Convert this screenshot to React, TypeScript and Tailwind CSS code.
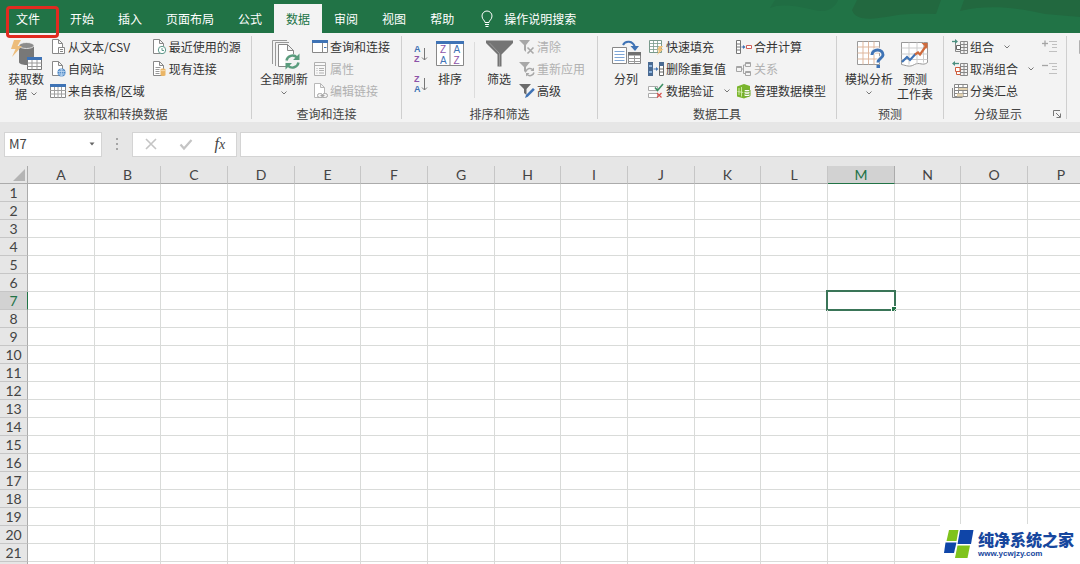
import type { ReactNode } from "react";

type Tone = "normal" | "muted";

const TABS = ["文件", "开始", "插入", "页面布局", "公式", "数据", "审阅", "视图", "帮助"];
const COLUMNS = "ABCDEFGHIJKLMNOPQRSTUVWXYZ".split("");
const ROWS = Array.from({ length: 40 }, (_, i) => i + 1);
const ACTIVE = { col: "M", row: 7 };

const Chevron = () => (
  <svg viewBox="0 0 6 4" className="h-1 w-1.5 shrink-0" fill="none" stroke="#777" aria-hidden="true">
    <path d="M0.5 0.5 3 3l2.5-2.5" />
  </svg>
);

const Icon = ({ children, large }: { children: ReactNode; large?: boolean }) => (
  <svg
    viewBox={large ? "0 0 32 32" : "0 0 16 16"}
    className={large ? "h-8 w-8 shrink-0" : "h-4 w-4 shrink-0"}
    fill="none"
    aria-hidden="true"
  >
    {children}
  </svg>
);

const Page = ({ color = "#888" }: { color?: string }) => (
  <path d="M2.5 0.5h6l4 4v10h-10zM8.5 0.5v4h4" fill="#fff" stroke={color} />
);

/* ---- small icons ---- */

const TextFileIcon = () => (
  <Icon>
    <Page />
    <path d="M8.500 8.500h6v6h-6z" fill="#fff" stroke="#888" />
    <path d="M10 10.500h3M10 12.500h3" stroke="#888" />
  </Icon>
);

const WebIcon = () => (
  <Icon>
    <Page />
    <circle cx="11.5" cy="11.5" r="4" fill="#4a86c5" />
    <path d="M8 10.500h7M8 13h7M11.500 8v7" stroke="#c9def3" strokeWidth="0.7" />
    <ellipse cx="11.5" cy="11.5" rx="1.8" ry="3.6" stroke="#c9def3" strokeWidth="0.7" />
  </Icon>
);

const TableIcon = () => (
  <Icon>
    <path d="M0.5 1.5h15v13h-15z" fill="#fff" stroke="#888" />
    <path d="M0 1h16v3H0z" fill="#3f73b5" />
    <path d="M0 7.5h16M0 11h16M4.5 4v11M8 4v11M11.5 4v11" stroke="#a0a0a0" />
  </Icon>
);

const RecentIcon = () => (
  <Icon>
    <Page />
    <circle cx="11" cy="11" r="3.7" fill="#fff" stroke="#5f9a8c" />
    <path d="M11 9v2.5h2" stroke="#5f9a8c" />
  </Icon>
);

const ExistingIcon = () => (
  <Icon>
    <Page />
    <path d="M4.5 6.5h5M4.5 8.5h4M4.5 10.5h4M4.5 12.5h4" stroke="#999" />
    <path d="M9.500 8.500c0-1.400 5-1.400 5 0V14c0 1.400-5 1.400-5 0z" fill="#eab566" />
    <path d="M9.500 8.800c0 1.200 5 1.200 5 0" stroke="#fbe3bd" strokeWidth="0.8" />
  </Icon>
);

const PaneIcon = () => (
  <Icon>
    <path d="M0.5 1.5h15v12h-15z" fill="#fff" stroke="#888" />
    <path d="M0 1h16v3H0z" fill="#3f73b5" />
    <path d="M10.5 4v9.5" stroke="#888" />
    <path d="M12 8.5h2.5" stroke="#3f73b5" />
  </Icon>
);

const PropertiesIcon = () => (
  <Icon>
    <path d="M2.5 1.5h11v13h-11z" fill="#f8f8f8" stroke="#b0b0b0" />
    <path d="M2.5 4.5h11" stroke="#b0b0b0" />
    <path d="M4.5 7.5h1M7 7.5h5M4.5 9.5h1M7 9.5h5M4.5 12h1M7 12h5" stroke="#b0b0b0" />
  </Icon>
);

const EditLinksIcon = () => (
  <Icon>
    <Page color="#b8b8b8" />
    <rect x="5.5" y="10.5" width="5" height="4" rx="2" fill="#f3f3f3" stroke="#a5a5a5" />
    <rect x="10.5" y="10.5" width="5" height="4" rx="2" fill="#f3f3f3" stroke="#a5a5a5" />
    <path d="M8.5 12.5h4" stroke="#a5a5a5" />
  </Icon>
);

const ClearFilterIcon = () => (
  <Icon>
    <path d="M0 1h11L7 6v7l-2-2V6z" fill="#a8a8a8" />
    <path d="m8.500 8.500 6 6M14.500 8.500l-6 6" stroke="#a8a8a8" strokeWidth="1.6" />
  </Icon>
);

const ReapplyIcon = () => (
  <Icon>
    <path d="M0 1h11L7 6v6l-2-2V6z" fill="#a8a8a8" />
    <path d="M7 10.500a4 4 0 0 1 7-1.500M15 11.500a4 4 0 0 1-7 1.700" stroke="#a8a8a8" strokeWidth="1.5" />
    <path d="M15 6.500v3.500h-3.500zM7 15.500V12h3.500z" fill="#a8a8a8" />
  </Icon>
);

const AdvancedIcon = () => (
  <Icon>
    <path d="M0 1h12L7.500 6v6l-2.500-2V6z" fill="#6b6b6b" />
    <path d="m6 15 1-3 7-7 1.800 1.800-7 7z" fill="#3f73b5" />
  </Icon>
);

const FlashFillIcon = () => (
  <Icon>
    <path d="M1.5 1.5h12v12h-12z" fill="#fff" stroke="#7a9a8c" />
    <path
      d="M1.5 4.5h12M1.5 7.5h12M1.5 10.5h12M5.5 1.5v12M9.5 1.5v12"
      stroke="#7a9a8c"
      strokeWidth="0.8"
    />
    <path d="M11 7h4l-2 3h2.500L9 16l2-4.500H9z" fill="#efc27a" />
  </Icon>
);

const DuplicatesIcon = () => (
  <Icon>
    <path d="M0 1h5v14H0z" fill="#4a6a92" />
    <path d="M1 4h3v2H1zM1 10h3v2H1z" fill="#8db4e0" />
    <path d="M11.5 1.5h4v13h-4z" fill="#fff" stroke="#666" />
    <path d="M11 1h5v4h-5z" fill="#4a6a92" />
    <path d="M11.5 8h4M11.5 11h4" stroke="#666" />
    <path d="M5.5 8h3" stroke="#3f73b5" />
    <path d="m8 6 2.500 2L8 10z" fill="#3f73b5" />
  </Icon>
);

const ValidationIcon = () => (
  <Icon>
    <path d="M0.5 3.5h9v4h-9zM0.5 10.5h9v4h-9z" fill="#fff" stroke="#aaa" />
    <path d="m7 4.500 2.500 3L15 1" stroke="#3d8f63" strokeWidth="1.6" />
    <path d="m9 10 4.500 4.500M13.500 10 9 14.500" stroke="#d9534f" strokeWidth="1.2" />
  </Icon>
);

const ConsolidateIcon = () => (
  <Icon>
    <path d="M0.5 1.5h4v13h-4zM0.5 5h4M0.5 8h4M0.5 11h4" fill="#fff" stroke="#777" />
    <path d="M5.500 8h3" stroke="#3f73b5" />
    <path d="M7 6l2.500 2L7 10z" fill="#3f73b5" />
    <path d="M10.5 6.5h5v3h-5z" fill="#fff" stroke="#d0605a" />
  </Icon>
);

const RelationsIcon = () => (
  <Icon>
    <path d="M0.5 5.5h5v5h-5zM9.5 1.5h5v4h-5zM9.5 10.5h5v4h-5z" stroke="#a5a5a5" />
    <path d="M0.5 6.5h5M9.5 2.5h5M9.5 11.5h5" stroke="#a5a5a5" />
    <path d="M5.5 8h2M7.5 4v8.5M7.5 4h2M7.5 12.5h2" stroke="#a5a5a5" />
  </Icon>
);

const ModelIcon = () => (
  <Icon>
    <path d="M1 3.500 8 1l6 2v10l-6 2.500-7-2z" fill="#7ab52d" />
    <path d="M3 5v7M1.500 8.500l6 1M5.500 4v9.500" stroke="#d4ecae" strokeWidth="0.9" />
    <path d="M8 7.500c0-1.500 6-1.500 6 0v5c0 1.500-6 1.500-6 0z" fill="#fff" stroke="#6fa82a" />
    <path d="M8 7.800c0 1.400 6 1.400 6 0M8 10.300c0 1.400 6 1.400 6 0" stroke="#6fa82a" />
  </Icon>
);

const GroupIcon = () => (
  <Icon>
    <path d="M8.5 2.5h7v12h-7zM8.5 5.5h7M8.5 8.5h7M8.5 11.5h7M12 2.5v12" stroke="#888" />
    <path d="M3.5 4v8.5h5" stroke="#888" />
    <path d="M4.5 6.5h4v4h-4z" fill="#fff" stroke="#666" />
    <path d="M0 2.5h4" stroke="#4c8f80" strokeWidth="1.3" />
    <path d="M3 0v5l3-2.500z" fill="#4c8f80" />
  </Icon>
);

const UngroupIcon = () => (
  <Icon>
    <path d="M8.5 2.5h7v12h-7zM8.5 5.5h7M8.5 8.5h7M8.5 11.5h7M12 2.5v12" stroke="#888" />
    <path d="M3.5 6.5h4.5v4H3.500zM4.500 10.500v3h4" fill="#fff" stroke="#cf5d3c" />
    <path d="M2 2.5h5" stroke="#4c8f80" strokeWidth="1.3" />
    <path d="M3 0v5L0 2.500z" fill="#4c8f80" />
  </Icon>
);

const SubtotalIcon = () => (
  <Icon>
    <path d="M2.5 1.5h13v12h-13z" fill="#fff" stroke="#888" />
    <path d="M2.5 4.5h13M2.5 7.5h13M2.5 10.5h13M6.5 1.5v12M11 1.5v12" stroke="#888" />
    <path d="M0.5 5v9.500h10" stroke="#888" />
    <path d="M6.500 5h9v2h-9zM5 10.500h6v3H5z" fill="#e5d3b0" />
  </Icon>
);

const DetailIcon = ({ plus }: { plus?: boolean }) => (
  <Icon>
    <path d="M0 4.5h6" stroke="#a5a5a5" strokeWidth="1.3" />
    {plus && <path d="M3 1.500v6" stroke="#a5a5a5" strokeWidth="1.3" />}
    <path d="M7 2.5h8M10 5.5h5M10 8.5h5M7 12.5h8" stroke="#c0c0c0" />
  </Icon>
);

const SortPairIcon = ({ top, bottom }: { top: string; bottom: string }) => (
  <svg viewBox="0 0 14 20" className="h-5 w-3.5" aria-hidden="true">
    <g fontFamily="Liberation Sans, sans-serif" fontSize="9" fontWeight="700">
      <text x="0" y="8" fill={top === "A" ? "#3f73b5" : "#8d54a8"}>{top}</text>
      <text x="0" y="18" fill={bottom === "A" ? "#3f73b5" : "#8d54a8"}>{bottom}</text>
    </g>
    <path d="M10.5 4v12M8 13.5l2.500 2.500 2.500-2.500" fill="none" stroke="#777" />
  </svg>
);

/* ---- large icons ---- */

const GetDataIcon = () => (
  <Icon large>
    <path d="M9 7v16c0 4 15 4 15 0V7z" fill="#787878" />
    <ellipse cx="16.5" cy="6.500" rx="7.500" ry="3" fill="#8c8c8c" stroke="#f3f3f3" strokeWidth="0.8" />
    <path d="M4 1h7L7.500 7H12L2 18l3.500-8H1z" fill="#edbd7b" />
    <path d="M17.5 18.5h14v12h-14z" fill="#fff" stroke="#777" />
    <path d="M17 18h15v3H17z" fill="#3f73b5" />
    <path d="M17.5 24h14M17.5 27.5h14M22 21v9.500M27 21v9.500" stroke="#999" />
  </Icon>
);

const RefreshAllIcon = () => (
  <Icon large>
    <path d="M4.5 25V1.5H19M7.5 27V3.5H21" stroke="#999" />
    <path d="M10.5 5.5h9l6 6v16h-15zM19.5 5.5v6h6" fill="#fff" stroke="#888" />
    <circle cx="24.500" cy="22.500" r="7.500" fill="#f3f3f3" />
    <path
      d="M18.500 21.500a6.200 6.200 0 0 1 10.500-3M30.500 23.500a6.200 6.200 0 0 1-10.500 3.200"
      stroke="#5a9c7d"
      strokeWidth="2.4"
    />
    <path d="M31.500 14.500v6.500H25zM17.500 30.500V24H24z" fill="#5a9c7d" />
  </Icon>
);

const SortIcon = () => (
  <Icon large>
    <path d="M2.5 3.5h27v23h-27z" fill="#fff" stroke="#888" />
    <path d="M2 2h28v3H2z" fill="#3f73b5" />
    <path d="M16 5v21.500" stroke="#888" />
    <g fontFamily="Liberation Sans, sans-serif" fontSize="10">
      <text x="6" y="14" fill="#8d54a8">Z</text>
      <text x="6" y="25" fill="#3f73b5">A</text>
      <text x="19.5" y="14" fill="#3f73b5">A</text>
      <text x="19.5" y="25" fill="#8d54a8">Z</text>
    </g>
  </Icon>
);

const FilterIcon = () => (
  <Icon large>
    <path d="M3 1.500h27V4L18.500 15.500v12h-4v-12L3 4z" fill="#747474" />
    <path d="M6.500 4l10 10.500V27" stroke="#999" />
  </Icon>
);

const SplitIcon = () => (
  <Icon large>
    <path d="M2.5 8.5h14v16h-14z" fill="#fff" stroke="#888" />
    <path d="M4.500 12.500h10M4.500 15.500h10M4.500 18.500h10M4.500 21.500h10" stroke="#7fa6d6" />
    <path d="M18.5 13.5h12v11h-12z" fill="#fff" stroke="#888" />
    <path d="M18 13h13v3.500H18z" fill="#707070" />
    <path d="M18.5 19.5h12M18.5 22.5h12M24.5 16.5v8" stroke="#999" />
    <path d="M13 6c2-4.500 10-5 12 2.500" stroke="#3f73b5" strokeWidth="2" />
    <path d="M20.500 7h8.500l-4 5z" fill="#3f73b5" />
  </Icon>
);

const WhatIfIcon = () => (
  <Icon large>
    <path d="M4.5 2.5h22v23h-22z" fill="#fff" stroke="#999" />
    <path d="M4.5 8h22M4.5 14h22M4.5 20h22M10 2.5v23M15.500 2.500v23M21 2.500v23" stroke="#dfb79d" />
    <path d="M19 16c0-7 11.500-6.500 11 0-.3 3.500-5 3.500-5 7.500" stroke="#f3f3f3" strokeWidth="5" />
    <path d="M19 16c0-7 11.500-6.500 11 0-.3 3.500-5 3.500-5 7.500" stroke="#3f73b5" strokeWidth="3" />
    <path d="M23.500 26h3.500v3h-3.500z" fill="#3f73b5" />
  </Icon>
);

const ForecastIcon = () => (
  <Icon large>
    <path d="M2.5 3.5h26v20c-5 4-8-1-13 2s-8 1-13 0z" fill="#fff" stroke="#999" />
    <path d="M2.5 9h26M2.5 15h26M2.5 20.5h26M10 3.5v22M18 3.5v22M24.500 3.500v20" stroke="#cdcdcd" />
    <path d="m3 23 5-5 3 3 5.500-6" stroke="#3f73b5" strokeWidth="2.2" />
    <path d="m16 15.500 3-2 2 2L27 7" stroke="#cf6a3c" strokeWidth="2.2" />
    <path d="M22.500 4h6v6z" fill="#cf6a3c" />
  </Icon>
);

/* ---- ribbon parts ---- */

const SmallButton = ({
  icon,
  label,
  tone = "normal",
  menu,
}: {
  icon: ReactNode;
  label: string;
  tone?: Tone;
  menu?: boolean;
}) => (
  <button
    type="button"
    disabled={tone === "muted"}
    className={`flex h-[22px] items-center gap-0.5 whitespace-nowrap text-xs ${
      tone === "muted" ? "text-[#b1b1b1]" : "text-[#333]"
    }`}
  >
    {icon}
    {label}
    {menu && (
      <span className="ml-2">
        <Chevron />
      </span>
    )}
  </button>
);

const LargeButton = ({
  icon,
  lines,
  menu,
}: {
  icon: ReactNode;
  lines: string[];
  menu?: "inline" | "below";
}) => (
  <button
    type="button"
    className="flex flex-col items-center whitespace-nowrap pt-[3px] text-[#333] text-xs leading-[15px]"
  >
    {icon}
    {lines.map((line, i) => (
      <span key={line} className="flex items-center gap-1">
        {line}
        {menu === "inline" && i === lines.length - 1 && <Chevron />}
      </span>
    ))}
    {menu === "below" && (
      <span className="flex h-3.5 items-center">
        <Chevron />
      </span>
    )}
  </button>
);

const Group = ({
  label,
  className,
  launcher,
  children,
}: {
  label: string;
  className: string;
  launcher?: boolean;
  children: ReactNode;
}) => (
  <section
    aria-label={label}
    className={`flex shrink-0 flex-col justify-between border-[#cfcfcf] border-r ${className}`}
  >
    <div className="flex items-start">{children}</div>
    <div className="flex h-2.5 items-center">
      <span className="flex-1 text-center text-[#444] text-xs">{label}</span>
      {launcher && (
        <button type="button" aria-label={label} className="mr-0.5 w-3">
          <svg viewBox="0 0 10 10" className="h-2.5 w-2.5" fill="none" stroke="#777" aria-hidden="true">
            <path d="M1.5 7V1.5H8M4 4l4 4M8.5 4.500v4h-4" />
          </svg>
        </button>
      )}
    </div>
  </section>
);

const TitleBar = () => (
  <header className="relative flex h-[33px] shrink-0 items-end overflow-hidden bg-[#217346] text-white text-xs">
    <svg viewBox="0 0 320 33" className="absolute top-0 right-0 h-[33px] w-80" aria-hidden="true">
      <path d="M10 8c10-5 28-2 44 2 10 3 20 0 24-10H15z" fill="#206d43" />
      <path d="M92 10c4 12 22 9 40 6s30-2 44-2l5-14H97z" fill="#22683f" />
      <path d="M200 11c30-7 58-3 85 3l35 3V0H204z" fill="#22683f" />
    </svg>
    <nav className="relative flex h-[29px] pl-1">
      {TABS.map((tab, i) => (
        <button
          key={tab}
          type="button"
          className={`h-full px-3 ${i === 0 ? "mr-1.5" : ""} ${
            tab === "数据" ? "bg-[#f3f3f3] text-[#217346]" : ""
          }`}
        >
          {tab}
        </button>
      ))}
    </nav>
    <button type="button" className="relative ml-2 flex h-[29px] items-center gap-2.5 px-1.5">
      <svg viewBox="0 0 14 18" className="h-[18px] w-3.5" fill="none" stroke="#fff" aria-hidden="true">
        <path d="M5 12.500c0-2-3-3-3-6.500a5 5 0 0 1 10 0c0 3.500-3 4.500-3 6.500zM5 14.500h4M5.500 16.500h3" />
      </svg>
      操作说明搜索
    </button>
  </header>
);

const Ribbon = () => (
  <div className="flex h-[89px] shrink-0 overflow-hidden bg-[#f3f3f3] py-[3px]">
    <Group label="获取和转换数据" className="w-[252px]">
      <div className="ml-2">
        <LargeButton icon={<GetDataIcon />} lines={["获取数", "据"]} menu="inline" />
      </div>
      <div className="ml-1.5">
        <SmallButton icon={<TextFileIcon />} label="从文本/CSV" />
        <SmallButton icon={<WebIcon />} label="自网站" />
        <SmallButton icon={<TableIcon />} label="来自表格/区域" />
      </div>
      <div className="ml-1.5">
        <SmallButton icon={<RecentIcon />} label="最近使用的源" />
        <SmallButton icon={<ExistingIcon />} label="现有连接" />
      </div>
    </Group>

    <Group label="查询和连接" className="w-[150px]">
      <div className="ml-2">
        <LargeButton icon={<RefreshAllIcon />} lines={["全部刷新"]} menu="below" />
      </div>
      <div className="ml-1">
        <SmallButton icon={<PaneIcon />} label="查询和连接" />
        <SmallButton icon={<PropertiesIcon />} label="属性" tone="muted" />
        <SmallButton icon={<EditLinksIcon />} label="编辑链接" tone="muted" />
      </div>
    </Group>

    <Group label="排序和筛选" className="w-[196px]">
      <div className="ml-3 flex flex-col gap-2.5 pt-2">
        <button type="button" aria-label="升序">
          <SortPairIcon top="A" bottom="Z" />
        </button>
        <button type="button" aria-label="降序">
          <SortPairIcon top="Z" bottom="A" />
        </button>
      </div>
      <div className="ml-1.5">
        <LargeButton icon={<SortIcon />} lines={["排序"]} />
      </div>
      <div className="mx-2 mt-1.5 h-14 w-px bg-[#dcdcdc]" />
      <LargeButton icon={<FilterIcon />} lines={["筛选"]} />
      <div className="ml-1">
        <SmallButton icon={<ClearFilterIcon />} label="清除" tone="muted" />
        <SmallButton icon={<ReapplyIcon />} label="重新应用" tone="muted" />
        <SmallButton icon={<AdvancedIcon />} label="高级" />
      </div>
    </Group>

    <Group label="数据工具" className="w-[239px]">
      <div className="ml-3">
        <LargeButton icon={<SplitIcon />} lines={["分列"]} />
      </div>
      <div className="ml-1.5">
        <SmallButton icon={<FlashFillIcon />} label="快速填充" />
        <SmallButton icon={<DuplicatesIcon />} label="删除重复值" />
        <SmallButton icon={<ValidationIcon />} label="数据验证" menu />
      </div>
      <div className="ml-1.5">
        <SmallButton icon={<ConsolidateIcon />} label="合并计算" />
        <SmallButton icon={<RelationsIcon />} label="关系" tone="muted" />
        <SmallButton icon={<ModelIcon />} label="管理数据模型" />
      </div>
    </Group>

    <Group label="预测" className="w-[107px]">
      <div className="ml-2">
        <LargeButton icon={<WhatIfIcon />} lines={["模拟分析"]} menu="below" />
      </div>
      <div className="ml-1">
        <LargeButton icon={<ForecastIcon />} lines={["预测", "工作表"]} />
      </div>
    </Group>

    <Group label="分级显示" className="w-[123px]" launcher>
      <div className="ml-2 flex-1">
        <SmallButton icon={<GroupIcon />} label="组合" menu />
        <SmallButton icon={<UngroupIcon />} label="取消组合" menu />
        <SmallButton icon={<SubtotalIcon />} label="分类汇总" />
      </div>
      <div className="mr-2">
        <button type="button" aria-label="显示明细数据" className="flex h-[22px] items-center">
          <DetailIcon plus />
        </button>
        <button type="button" aria-label="隐藏明细数据" className="flex h-[22px] items-center">
          <DetailIcon />
        </button>
      </div>
    </Group>

    <button type="button" aria-label="更多工具" className="ml-2.5 flex h-[22px] items-center">
      <PropertiesIcon />
    </button>
  </div>
);

const FormulaBar = () => (
  <div className="flex h-11 shrink-0 items-center bg-[#e6e6e6] pl-1">
    <div className="flex h-[25px] w-[98px] items-center border border-[#d4d4d4] bg-white">
      <input
        aria-label="名称框"
        defaultValue="M7"
        className="w-full min-w-0 flex-1 px-1 text-[#444] text-[13px] outline-none"
      />
      <button type="button" aria-label="打开名称列表" className="px-1.5">
        <svg viewBox="0 0 6 4" className="h-1 w-1.5" aria-hidden="true">
          <path d="M0.5 0.5h5L3 3.5z" fill="#666" />
        </svg>
      </button>
    </div>
    <svg viewBox="0 0 2 12" className="mx-3.5 h-3 w-0.5 shrink-0" fill="#a5a5a5" aria-hidden="true">
      <path d="M0 0h2v2H0zM0 5h2v2H0zM0 10h2v2H0z" />
    </svg>
    <div className="flex h-[25px] w-[105px] items-center justify-around border border-[#d4d4d4] bg-white">
      <button type="button" aria-label="取消">
        <svg
          viewBox="0 0 14 14"
          className="h-3.5 w-3.5"
          fill="none"
          stroke="#c4c4c4"
          strokeWidth="1.600"
          aria-hidden="true"
        >
          <path d="m2 2 10 10M12 2 2 12" />
        </svg>
      </button>
      <button type="button" aria-label="输入">
        <svg
          viewBox="0 0 14 14"
          className="h-3.5 w-3.5"
          fill="none"
          stroke="#c4c4c4"
          strokeWidth="2.200"
          aria-hidden="true"
        >
          <path d="m1.500 7.500 3.500 4L12.500 3" />
        </svg>
      </button>
      <button
        type="button"
        aria-label="插入函数"
        className="font-['Liberation_Serif',serif] text-[#444] text-base italic leading-5"
      >
        f<span className="text-sm">x</span>
      </button>
    </div>
    <input
      aria-label="编辑栏"
      className="ml-[3px] h-[25px] min-w-0 flex-1 border border-[#d4d4d4] border-r-0 bg-white px-1 text-[13px] outline-none"
    />
  </div>
);

const Sheet = () => (
  <div className="min-h-0 flex-1 overflow-hidden">
    <table className="w-px table-fixed border-separate border-spacing-0 font-[Lato,sans-serif] text-[#444] text-sm leading-[17px]">
      <colgroup>
        <col className="w-7" />
        {COLUMNS.map((c, i) => (
          <col key={c} className={i % 3 === 1 ? "w-[66px]" : "w-[67px]"} />
        ))}
      </colgroup>
      <thead>
        <tr className="h-[18px] bg-[#e6e6e6]">
          <td className="border-[#ababab] border-r border-b p-0">
            <svg viewBox="0 0 12 12" className="mt-px mr-0.5 ml-auto h-3 w-3" aria-hidden="true">
              <path d="M12 0v12H0z" fill="#b4b4b4" />
            </svg>
          </td>
          {COLUMNS.map((c) => (
            <th
              key={c}
              scope="col"
              className={`border-r p-0 font-normal ${
                c === ACTIVE.col
                  ? "border-[#ababab] border-b border-b-[#217346] bg-[#d2d2d2] text-[#217346]"
                  : "border-[#c6c6c6] border-b border-b-[#ababab]"
              }`}
            >
              {c}
            </th>
          ))}
        </tr>
      </thead>
      <tbody>
        {ROWS.map((r) => (
          <tr key={r} className="h-[18px]">
            <th
              scope="row"
              className={`border-r border-b p-0 font-normal ${
                r === ACTIVE.row
                  ? "border-[#c6c6c6] border-r-[#217346] bg-[#d2d2d2] text-[#217346]"
                  : "border-[#c6c6c6] border-r-[#ababab] bg-[#e6e6e6]"
              }`}
            >
              {r}
            </th>
            {COLUMNS.map((c) => (
              <td key={c} className="relative border-[#d9dbd9] border-r border-b p-0">
                {r === ACTIVE.row && c === ACTIVE.col && (
                  <div className="absolute -inset-0.5 border-2 border-[#3a7558]">
                    <span className="absolute -right-0.5 -bottom-0.5 h-1 w-1 bg-[#217346] outline outline-white" />
                  </div>
                )}
              </td>
            ))}
          </tr>
        ))}
      </tbody>
    </table>
  </div>
);

const SiteBadge = () => (
  <a
    href="#home"
    className="absolute right-0 bottom-0 flex h-10 items-center gap-1 bg-white pr-1.5 pl-1 text-[#17479e]"
  >
    <svg viewBox="0 0 30 30" className="h-[30px] w-[30px]" aria-hidden="true">
      <path d="M5 1h9.500l-2 11H2.500z" fill="#7fc31c" />
      <path d="M16 1h13.500l-2.500 14H13.500z" fill="#0f45a8" />
      <path d="M1.500 13.500h11L10 24H0z" fill="#0f45a8" />
      <path d="M13.500 16.500H26L23.500 29H11z" fill="#7fc31c" />
    </svg>
    <span className="flex flex-col">
      <span className="font-black text-base leading-5">纯净系统之家</span>
      <span className="font-['Liberation_Sans',sans-serif] font-bold text-[8px] leading-[10px]">
        www.ycwjzy.com
      </span>
    </span>
  </a>
);

export default function App() {
  return (
    <div className="relative flex h-screen flex-col overflow-hidden bg-white font-['Noto_Sans_CJK_SC',sans-serif]">
      <TitleBar />
      <Ribbon />
      <FormulaBar />
      <Sheet />
      <SiteBadge />
      <div className="pointer-events-none absolute top-1.5 left-1.5 h-8 w-[53px] rounded border-3 border-[#e02b20]" />
    </div>
  );
}
